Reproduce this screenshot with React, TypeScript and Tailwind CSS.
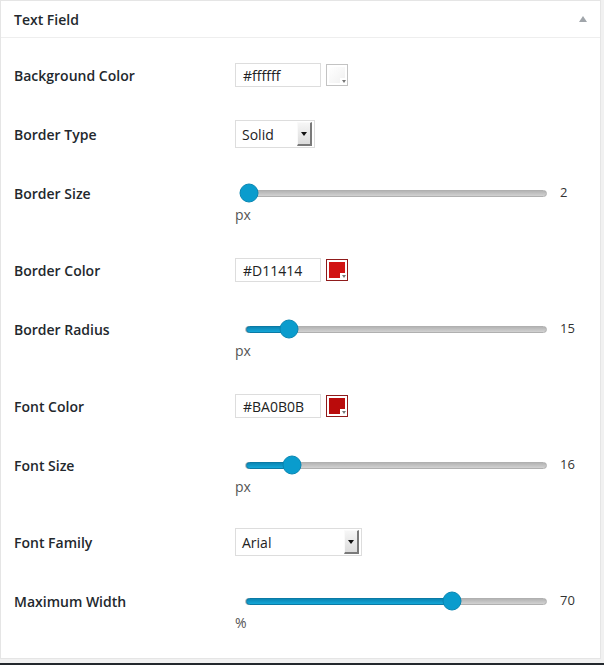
import React from 'react';

type Row =
  | { kind: 'color'; label: string; value: string; swatch: string | null }
  | { kind: 'select'; label: string; value: string; width: string }
  | { kind: 'slider'; label: string; value: number; unit: string; offset: number };

const rows: Row[] = [
  { kind: 'color', label: 'Background Color', value: '#ffffff', swatch: null },
  { kind: 'select', label: 'Border Type', value: 'Solid', width: 'w-[80px]' },
  { kind: 'slider', label: 'Border Size', value: 2, unit: 'px', offset: 3 },
  { kind: 'color', label: 'Border Color', value: '#D11414', swatch: '#d11414' },
  { kind: 'slider', label: 'Border Radius', value: 15, unit: 'px', offset: 43 },
  { kind: 'color', label: 'Font Color', value: '#BA0B0B', swatch: '#ba0b0b' },
  { kind: 'slider', label: 'Font Size', value: 16, unit: 'px', offset: 46 },
  { kind: 'select', label: 'Font Family', value: 'Arial', width: 'w-[127px]' },
  { kind: 'slider', label: 'Maximum Width', value: 70, unit: '%', offset: 207 },
];

const TRACK_W = 302;

const Swatch = ({ color }: { color: string | null }) => {
  const filled = color !== null;
  return (
    <div
      className={`relative w-[22px] h-[22px] border ${
        filled ? 'border-[#8f1b1b]' : 'border-[#c3c3c3]'
      } bg-white`}
    >
      <div
        className={`absolute inset-[2px] ${filled ? '' : 'bg-gradient-to-br from-white to-[#f0f0f0]'}`}
        style={filled ? { background: `linear-gradient(135deg, ${color}, ${color})` } : undefined}
      />
      {/* little dropdown corner */}
      <div className="absolute right-0 bottom-0 w-[7px] h-[7px] bg-white flex items-center justify-center">
        <div className="w-0 h-0 border-l-[2px] border-r-[2px] border-t-[3px] border-l-transparent border-r-transparent border-t-[#777]" />
      </div>
    </div>
  );
};

const SelectBox = ({ value, width }: { value: string; width: string }) => (
  <div className={`${width} h-[28px] border border-[#dddddd] bg-white flex items-center justify-between pl-[6px] pr-[2px]`}>
    <span className="text-[14px] text-[#222]">{value}</span>
    <div className="w-[15px] h-[24px] bg-gradient-to-b from-[#f6f6f6] to-[#dcdcdc] border-r-2 border-b-2 border-[#7a7a7a] border-t border-l border-t-[#fafafa] border-l-[#fafafa] flex items-center justify-center">
      <div className="w-0 h-0 border-l-[3px] border-r-[3px] border-t-[4px] border-l-transparent border-r-transparent border-t-[#111]" />
    </div>
  </div>
);

const Slider = ({ value, unit, offset }: { value: number; unit: string; offset: number }) => (
  <div>
    <div className="h-5 flex items-center">
      <div className="w-[10px]" />
      <div className="relative w-[302px] h-[7px] rounded-full bg-gradient-to-b from-[#b4b4b4] to-[#d2d2d2] border border-[#b0b0b0]">
        <div
          className="absolute left-0 top-[-1px] h-[7px] rounded-full bg-gradient-to-b from-[#0a86b4] to-[#14a7d8] border border-[#0a7aa5]"
          style={{ width: `${(offset / TRACK_W) * 100}%` }}
        />
        <div
          className="absolute top-1/2 w-[19px] h-[19px] -translate-x-1/2 -translate-y-1/2 rounded-full bg-[#0a9ccd] border border-[#0886b2]"
          style={{ left: `${(offset / TRACK_W) * 100}%` }}
        />
      </div>
      <span className="ml-[13px] text-[13px] text-[#333]">{value}</span>
    </div>
    <div className="mt-[3px] leading-[18px] text-[14px] text-[#555]">{unit}</div>
  </div>
);

export default function App() {
  return (
    <div
      className="w-[604px] h-[665px] bg-[#f1f1f1] flex flex-col"
      style={{ fontFamily: '"Open Sans", "Noto Sans", sans-serif' }}
    >
      <div className="w-[601px] bg-white border border-[#e5e5e5]">
        {/* Header */}
        <div className="h-[37px] border-b border-[#eeeeee] flex items-center justify-between pl-[13px] pr-[13px]">
          <span className="text-[14px] font-semibold text-[#23282d]">Text Field</span>
          <div className="w-0 h-0 border-l-[4px] border-r-[4px] border-b-[6px] border-l-transparent border-r-transparent border-b-[#a0a5aa]" />
        </div>

        {/* Body */}
        <div className="pt-[7px] pb-[10px] pl-[13px]">
          {rows.map((row) => (
            <div
              key={row.label}
              className={`flex items-start pt-5 ${row.kind === 'slider' ? 'pb-[16px]' : 'pb-[19px]'}`}
            >
              <div className="w-[221px] h-5 flex items-center text-[14px] font-semibold text-[#23282d]">
                {row.label}
              </div>
              {row.kind === 'color' && (
                <div className="h-5 flex items-center gap-[5px]">
                  <div className="w-[86px] h-[24px] border border-[#dddddd] bg-white flex items-center pl-[7px] text-[14px] text-[#222]">
                    {row.value}
                  </div>
                  <Swatch color={row.swatch} />
                </div>
              )}
              {row.kind === 'select' && (
                <div className="h-5 flex items-center">
                  <SelectBox value={row.value} width={row.width} />
                </div>
              )}
              {row.kind === 'slider' && <Slider value={row.value} unit={row.unit} offset={row.offset} />}
            </div>
          ))}
        </div>
      </div>
      <div className="flex-1" />
      <div className="h-[2px] bg-[#23282d]" />
    </div>
  );
}
